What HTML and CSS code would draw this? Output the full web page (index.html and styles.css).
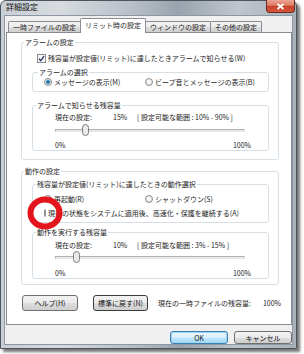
FILE: index.html
```html
<!DOCTYPE html>
<html lang="ja">
<head>
  <meta charset="UTF-8">
  <title>詳細設定</title>
  <link rel="stylesheet" href="styles.css">
</head>
<body>

  <div class="window">
    <div class="titlebar">
      <span class="title">詳細設定</span>
      <div class="close">
        <svg width="9" height="7" viewBox="0 0 9 7"><path d="M1.5 1 L7.5 6 M7.5 1 L1.5 6" stroke="#fff" stroke-width="1.8"/></svg>
      </div>
    </div>

    <div class="client">
      <div class="tabs">
        <div class="tab">一時ファイルの設定</div>
        <div class="tab active">リミット時の設定</div>
        <div class="tab">ウィンドウの設定</div>
        <div class="tab">その他の設定</div>
      </div>

      <div class="panel">
        <!-- alarm -->
        <fieldset class="group outer">
          <legend>アラームの設定</legend>
          <label class="check-row">
            <svg class="checkbox" width="9" height="9" viewBox="0 0 9 9"><rect x="0.5" y="0.5" width="8" height="8" fill="#f4f4f4" stroke="#8e8f8f"/><path d="M2 4.6 L3.8 6.6 L7 2.2" fill="none" stroke="#2c3a66" stroke-width="1.4"/></svg>
            残容量が設定値(リミット)に達したときアラームで知らせる(W)
          </label>

          <fieldset class="group inner first">
            <legend class="legend-wide">アラームの選択</legend>
            <div class="radio-row">
              <span class="radio-item"><span class="radio on"></span>メッセージの表示(M)</span>
              <span class="radio-item"><span class="radio"></span>ビープ音とメッセージの表示(B)</span>
            </div>
          </fieldset>

          <fieldset class="group inner amount">
            <legend>アラームで知らせる残容量</legend>
            <div class="setting">
              <span class="setting-label">現在の設定:</span>
              <span class="setting-value">15%</span>
              <span>[ 設定可能な範囲 : 10% - 90% ]</span>
            </div>
            <div class="slider">
              <div class="track"></div>
              <svg class="thumb" style="--v: 0.15" width="7" height="12" viewBox="0 0 7 12"><rect x="0.5" y="0.5" width="6" height="11" rx="3" fill="#e9e9e9" stroke="#7d7d7d"/></svg>
            </div>
            <div class="scale"><span>0%</span><span>100%</span></div>
          </fieldset>
        </fieldset>

        <!-- action -->
        <fieldset class="group outer second">
          <legend>動作の設定</legend>

          <fieldset class="group inner first">
            <legend>残容量が設定値(リミット)に達したときの動作選択</legend>
            <div class="radio-row">
              <span class="radio-item"><span class="radio"></span>再起動(R)</span>
              <span class="radio-item"><span class="radio"></span>シャットダウン(S)</span>
            </div>
            <div class="radio-row">
              <span class="radio-item"><span class="radio on"></span>現在の状態をシステムに適用後、高速化・保護を継続する(A)</span>
            </div>
          </fieldset>

          <fieldset class="group inner amount">
            <legend>動作を実行する残容量</legend>
            <div class="setting">
              <span class="setting-label">現在の設定:</span>
              <span class="setting-value">10%</span>
              <span>[ 設定可能な範囲 : 3% - 15% ]</span>
            </div>
            <div class="slider">
              <div class="track"></div>
              <svg class="thumb" style="--v: 0.10" width="7" height="12" viewBox="0 0 7 12"><rect x="0.5" y="0.5" width="6" height="11" rx="3" fill="#e9e9e9" stroke="#7d7d7d"/></svg>
            </div>
            <div class="scale"><span>0%</span><span>100%</span></div>
          </fieldset>
        </fieldset>

        <div class="panel-footer">
          <button class="btn help">ヘルプ(H)</button>
          <button class="btn reset">標準に戻す(N)</button>
          <span class="remain">現在の一時ファイルの残容量:</span>
          <span class="remain-value">100%</span>
        </div>
      </div>

      <div class="dialog-buttons">
        <button class="btn default">OK</button>
        <button class="btn">キャンセル</button>
      </div>
    </div>
  </div>

  <svg class="mark" width="38" height="36" viewBox="0 0 38 36"><ellipse cx="19" cy="18" rx="14.5" ry="13.5" fill="none" stroke="#e3141b" stroke-width="6"/></svg>

</body>
</html>
```

FILE: styles.css
```css
* {
  box-sizing: border-box;
}
body {
  margin: 0;
  width: 304px;
  height: 354px;
  overflow: hidden;
  position: relative;
  background-color: #fff;
  font-family: "Noto Sans CJK JP", sans-serif;
  font-size: 7px;
  color: #1c1c1c;
}

/* window frame */
.window {
  width: 297px;
  height: 349px;
  padding: 0 3px 3px 3px;
  display: flex;
  flex-direction: column;
  border: 1px solid #4b5560;
  border-radius: 6px 6px 0 0;
  background: linear-gradient(to right, #c9ced4 0%, #d7dbe0 20%, #b7bec6 45%, #9aa3ad 60%, #bfc5cc 80%, #a9b1ba 100%);
  box-shadow: 3px 3px 3px rgba(0, 0, 0, 0.55);
}
.titlebar {
  height: 14px;
  display: flex;
  justify-content: space-between;
}
.title {
  font-size: 8px;
  line-height: 12px;
  padding-left: 2px;
  color: #111;
}
.close {
  width: 29px;
  height: 13px;
  margin-top: -1px;
  margin-right: -2px;
  display: flex;
  align-items: center;
  justify-content: center;
  border: 1px solid #6a2a1f;
  border-top: none;
  border-radius: 0 0 4px 4px;
  background: linear-gradient(#eba493, #dd7a63 45%, #c6402a 50%, #d4583d);
}
.client {
  flex: 1;
  padding: 2px 0 0 1px;
  background-color: #f0f0f0;
  border: 1px solid #8b97a4;
}

/* tabs */
.tabs {
  height: 14px;
  padding-left: 2px;
  display: flex;
  align-items: flex-end;
}
.tab {
  height: 11px;
  padding: 0 4px;
  margin-right: -1px;
  line-height: 10px;
  text-align: center;
  white-space: nowrap;
  border: 1px solid #898c95;
  border-bottom: none;
  border-radius: 2px 2px 0 0;
  background: linear-gradient(#f3f3f3, #ebebeb 50%, #dddddd 50%, #cfcfcf);
}
.tab.active {
  height: 15px;
  margin-bottom: -1px;
  line-height: 12px;
  position: relative;
  z-index: 1;
  background: #fff;
}

.panel {
  height: 293px;
  background-color: #fff;
  border: 1px solid #898c95;
}

/* group boxes */
.group {
  margin: 0;
  padding: 0;
  min-width: 0;
  border: 1px solid #d5dfe5;
  border-radius: 3px;
}
.group legend {
  padding: 0 1px;
  margin-left: 2px;
  line-height: 10px;
}
.outer {
  margin: 4px 12px 0 14px;
  padding-bottom: 8px;
}
.outer.second {
  margin-top: 6px;
  padding-bottom: 5px;
}
.inner {
  margin: 8px 9px 0 10px;
}
.inner.first {
  margin-top: 4px;
}
.second .inner.first {
  margin-top: 3px;
  padding: 5px 0 4px;
}
.second .inner.amount {
  margin-top: 4px;
}
.inner legend {
  margin-left: 3px;
}
.inner .legend-wide {
  margin-left: 5px;
}

.check-row {
  height: 10px;
  margin: 6px 0 0 15px;
  display: flex;
  align-items: center;
  gap: 2px;
  white-space: nowrap;
}

.radio-row {
  height: 10px;
  padding-left: 11px;
  display: flex;
  align-items: center;
  white-space: nowrap;
}
.inner.first > .radio-row:first-of-type {
  margin-bottom: 0;
}
.second .radio-row + .radio-row {
  margin-top: 4px;
}
.inner.first:not(.second .inner) {
  padding-bottom: 4px;
}
.radio-item {
  display: flex;
  align-items: center;
  gap: 2px;
}
.radio-item:first-child {
  width: 101px;
}
.radio {
  width: 8px;
  height: 8px;
  border-radius: 50%;
  border: 1px solid #8a8b8c;
  background: radial-gradient(circle at 50% 40%, #ffffff, #dcdcdc);
}
.radio.on {
  background: radial-gradient(circle, #1d5a86 0, #3f8fc0 1.6px, #cfe6f3 2.4px, #eeeeee 3px);
}

/* setting rows */
.setting {
  height: 10px;
  margin-top: 2px;
  padding-left: 22px;
  display: flex;
  align-items: center;
  white-space: nowrap;
}
.second .setting {
  margin-top: 3px;
}
.setting-label {
  width: 58px;
}
.setting-value {
  width: 24px;
}
.slider {
  position: relative;
  width: 190px;
  height: 12px;
  margin: 2px 0 0 22px;
}
.second .slider {
  margin-top: 1px;
}
.track {
  position: relative;
  top: 5px;
  height: 3px;
  border: 1px solid;
  border-color: #b0b0b0 #e3e6e6 #e3e6e6 #b0b0b0;
  background-color: #e8ebeb;
}
.thumb {
  position: absolute;
  top: 0;
  left: calc((100% - 7px) * var(--v));
}
.scale {
  width: 196px;
  height: 10px;
  margin: 4px 0 0 22px;
  display: flex;
  justify-content: space-between;
  align-items: center;
  padding-bottom: 1px;
}
.second .scale {
  margin-top: 5px;
}

/* buttons */
.btn {
  font: inherit;
  color: #111;
  padding: 0;
  border: 1px solid #707070;
  border-radius: 3px;
  background: linear-gradient(#f2f2f2, #ebebeb 50%, #dddddd 50%, #cfcfcf);
}
.panel-footer {
  margin: 10px 0 0 15px;
  display: flex;
  align-items: center;
  white-space: nowrap;
}
.panel-footer .btn {
  height: 16px;
}
.help {
  width: 56px;
}
.reset {
  width: 55px;
  margin-left: 15px;
  border-color: #3b3b3b;
}
.remain {
  margin-left: 10px;
}
.remain-value {
  margin-left: 12px;
}
.dialog-buttons {
  margin-top: 6px;
  padding-right: 0;
  display: flex;
  justify-content: flex-end;
  gap: 6px;
}
.dialog-buttons .btn {
  width: 58px;
  height: 13px;
  line-height: 10px;
}
.btn.default {
  border-color: #3c7fb1;
  background: linear-gradient(#eaf6fd, #d9f0fc 50%, #bee6fd 50%, #a7d9f5);
  box-shadow: inset 0 0 0 1px #9fd3f2;
}

/* annotation */
.mark {
  position: absolute;
  left: 26px;
  top: 195px;
}
```
